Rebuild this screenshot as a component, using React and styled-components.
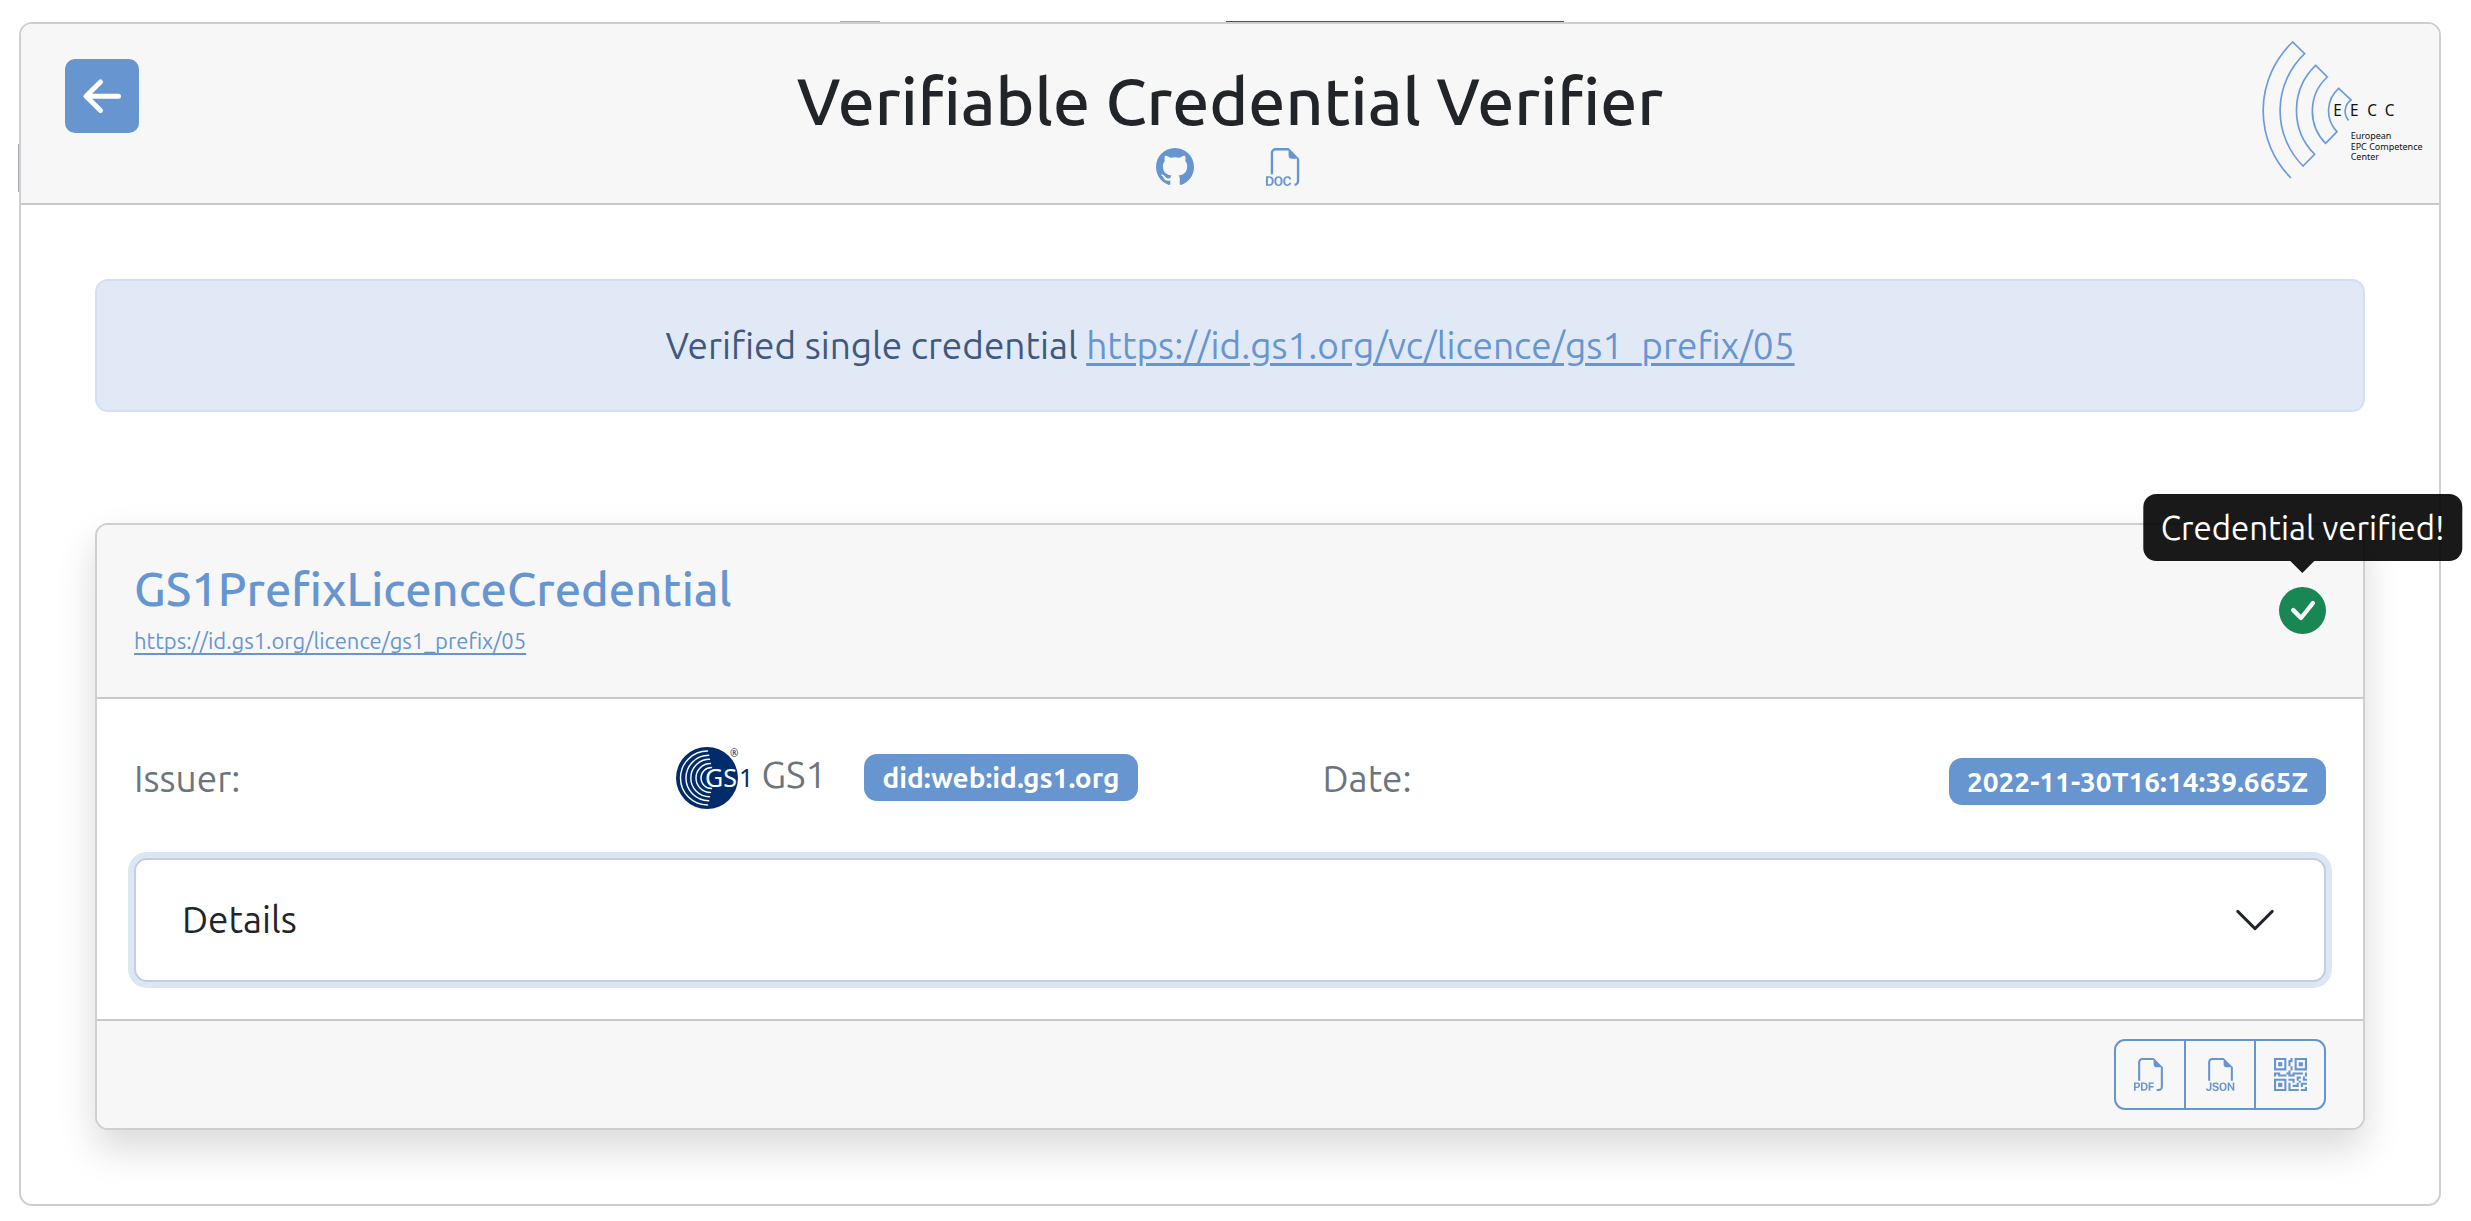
import React, { useState } from "react";
import styled, { createGlobalStyle } from "styled-components";
import {
  BsGithub,
  BsFiletypeDoc,
  BsFiletypePdf,
  BsFiletypeJson,
  BsQrCode,
  BsCheckCircleFill,
} from "react-icons/bs";

const color = {
  primary: "#6795d0",
  text: "#212529",
  muted: "#6c757d",
  line: "#cfcfcf",
  cap: "#f7f7f7",
};

const GlobalStyle = createGlobalStyle`
  *, *::before, *::after { box-sizing: border-box; }
  body {
    margin: 0;
    background: #fff;
    color: ${color.text};
    font-family: Ubuntu, "Noto Sans", "Open Sans", sans-serif;
    font-size: 37px;
    line-height: 56px;
  }
  h1, h2, p { margin: 0; font-weight: 500; }
  a { color: ${color.primary}; text-underline-offset: 4px; }
  button { font: inherit; color: inherit; cursor: pointer; }
`;

const Page = styled.div`
  padding: 22px 30px 15px 19px;
  background:
    linear-gradient(#4a525a, #4a525a) 1226px 21px / 338px 1px no-repeat,
    linear-gradient(#aaa, #aaa) 840px 21px / 40px 1px no-repeat,
    linear-gradient(#a9a9b2, #a9a9b2) 18px 144px / 1px 48px no-repeat;
`;

const Panel = styled.main`
  border: 2px solid ${color.line};
  border-radius: 13px;
  background: #fff;
`;

const PanelHeader = styled.header`
  display: grid;
  grid-template-columns: 1fr auto 1fr;
  align-items: start;
  padding: 14px 12px 17px;
  background: ${color.cap};
  border-bottom: 2px solid #c9c9c9;
  border-radius: 11px 11px 0 0;
`;

const BackButton = styled.button`
  display: flex;
  width: 74px;
  height: 74px;
  margin: 21px 0 0 32px;
  padding: 0;
  border: 0;
  border-radius: 10px;
  background: ${color.primary};
  color: #fff;
`;

const Heading = styled.div`
  display: flex;
  flex-direction: column;
  align-items: center;
  padding-top: 22px;
`;

const Title = styled.h1`
  font-size: 66px;
  line-height: 80px;
`;

const HeaderLinks = styled.nav`
  display: flex;
  gap: 72px;
  margin-top: 8px;
  a { display: flex; }
`;

const Logo = styled.svg`
  display: block;
  justify-self: end;
`;

const Content = styled.div`
  display: grid;
  gap: 111px;
  padding: 74px;
`;

const Alert = styled.p`
  padding: 37px;
  border: 2px solid #d2e0f1;
  border-radius: 13px;
  background: #e1e9f6;
  color: #3e597d;
  font-weight: 400;
  line-height: 55px;
  text-align: center;
`;

const Card = styled.section`
  border: 2px solid ${color.line};
  border-radius: 13px;
  background: #fff;
  box-shadow: 0 19px 38px rgba(0, 0, 0, 0.15);
`;

const CardHeader = styled.header`
  display: flex;
  justify-content: space-between;
  align-items: center;
  padding: 31px 37px 32px;
  background: ${color.cap};
  border-bottom: 2px solid #c9c9c9;
  border-radius: 11px 11px 0 0;
`;

const CardHeading = styled.div`
  padding-top: 5px;
`;

const CardTitle = styled.h2`
  color: ${color.primary};
  font-size: 47px;
  line-height: 56px;
`;

const CardLink = styled.a`
  display: block;
  font-size: 22px;
  line-height: 48px;
`;

const Status = styled.div`
  position: relative;
  display: flex;
  color: #198754;
`;

const Tooltip = styled.div`
  position: absolute;
  bottom: calc(100% + 26px);
  left: 50%;
  transform: translateX(-50%);
  padding: 10px 18px;
  border-radius: 13px;
  background: rgba(0, 0, 0, 0.9);
  color: #fff;
  font-size: 33px;
  line-height: 47px;
  white-space: nowrap;

  &::after {
    content: "";
    position: absolute;
    top: 100%;
    left: 50%;
    margin-left: -12px;
    border: 12px solid transparent;
    border-top-color: rgba(0, 0, 0, 0.9);
    border-bottom: 0;
  }
`;

const CardBody = styled.div`
  padding: 38px 37px 37px;
`;

const Facts = styled.dl`
  display: flex;
  justify-content: space-between;
  gap: 185px;
  margin: 0 0 37px;
`;

const Fact = styled.div`
  display: flex;
  flex: 1;
  justify-content: space-between;
  align-items: ${(p) => p.$align};
  height: 84px;
  padding: ${(p) => (p.$align === "baseline" ? "14px 0" : "0")};
  color: ${color.muted};
`;

const FactValue = styled.dd`
  display: flex;
  align-items: baseline;
  margin: 0;
  padding-bottom: 2px;
  svg { align-self: center; }
`;

const IssuerName = styled.span`
  margin: 0 38px 0 8px;
`;

const Badge = styled.span`
  padding: 5px 18px;
  border-radius: 13px;
  background: ${color.primary};
  color: #fff;
  font-size: 28px;
  font-weight: 700;
  line-height: 37px;
`;

const DetailsButton = styled.button`
  display: flex;
  justify-content: space-between;
  align-items: center;
  width: 100%;
  padding: 32px 46px;
  border: 2px solid #c2cfe3;
  border-radius: 13px;
  background: #fff;
  color: ${color.text};
  text-align: left;
  outline: none;
  box-shadow: 0 0 0 6px #dbe7f3;
`;

const CardFooter = styled.footer`
  display: flex;
  justify-content: flex-end;
  padding: 18px 37px;
  background: ${color.cap};
  border-top: 2px solid #c9c9c9;
  border-radius: 0 0 11px 11px;
`;

const ButtonGroup = styled.div`
  display: flex;
  border: 2px solid ${color.primary};
  border-radius: 11px;
`;

const GroupButton = styled.button`
  display: flex;
  align-items: center;
  justify-content: center;
  height: 67px;
  padding: 0 17px 0 18px;
  border: 0;
  background: transparent;
  color: ${color.primary};
  & + & { border-left: 2px solid ${color.primary}; }
`;

function ArrowLeft() {
  return (
    <svg
      width="74"
      height="74"
      viewBox="0 0 74 74"
      fill="none"
      stroke="currentColor"
      strokeWidth="5"
      strokeLinecap="round"
      strokeLinejoin="round"
      aria-hidden="true"
    >
      <path d="M35.5 23L21 37.3L35.5 51.5M22 37.3H53.5" />
    </svg>
  );
}

function EeccLogo() {
  return (
    <Logo width="167" height="144" viewBox="120 112 501 432" role="img" aria-label="EECC">
      <g fill="none" stroke="#6a9be0" strokeWidth="5">
        <path d="M213 532A285 285 0 0 1 218 124L254 159A235 235 0 0 0 249 496L284 461A187 187 0 0 1 287 194L322 229A138 138 0 0 0 317 428L351 393A90 90 0 0 1 356 263L393 298A41 41 0 0 0 386 359" />
      </g>
      <g fill="#111" fontFamily="Noto Sans, Open Sans, sans-serif">
        <text x="340 390 442 494" y="347" fontSize="46">EECC</text>
        <text x="392" y="416" fontSize="27">European</text>
        <text x="392" y="447" fontSize="27">EPC Competence</text>
        <text x="392" y="479" fontSize="27">Center</text>
      </g>
    </Logo>
  );
}

function Gs1Logo() {
  return (
    <svg width="78" height="62" viewBox="0 0 78 62" role="img" aria-label="GS1 logo">
      <circle cx="31" cy="31" r="31" fill="#002c6c" />
      <g fill="none" stroke="#fff" strokeWidth="1.4" strokeLinecap="round">
        <path d="M31.5 4A27 27 0 0 0 31.5 58" />
        <path d="M32.7 8.3A22.7 22.7 0 0 0 32.7 53.7" />
        <path d="M33.5 12.3A18.7 18.7 0 0 0 33.5 49.7" />
        <path d="M34.5 16.5A14.5 14.5 0 0 0 34.5 45.5" />
        <path d="M35.5 20.5A10.5 10.5 0 0 0 35.5 41.5" />
      </g>
      <g fontFamily="Noto Sans, Open Sans, sans-serif">
        <text x="29" y="40" fontSize="25" fill="#fff">GS</text>
        <text x="63" y="40" fontSize="25" fill="#002c6c">1</text>
        <text x="54" y="10" fontSize="10" fill="#002c6c">®</text>
      </g>
    </svg>
  );
}

function Chevron() {
  return (
    <svg width="46" height="46" viewBox="0 0 16 16" fill={color.text} aria-hidden="true">
      <path
        fillRule="evenodd"
        d="M1.646 4.646a.5.5 0 0 1 .708 0L8 10.293l5.646-5.647a.5.5 0 0 1 .708.708l-6 6a.5.5 0 0 1-.708 0l-6-6a.5.5 0 0 1 0-.708z"
      />
    </svg>
  );
}

export default function App() {
  const [open, setOpen] = useState(false);
  return (
    <>
      <GlobalStyle />
      <Page>
        <Panel>
          <PanelHeader>
            <BackButton type="button" aria-label="Back">
              <ArrowLeft />
            </BackButton>
            <Heading>
              <Title>Verifiable Credential Verifier</Title>
              <HeaderLinks>
                <a href="#github" aria-label="GitHub"><BsGithub size={38} /></a>
                <a href="#docs" aria-label="Documentation"><BsFiletypeDoc size={38} /></a>
              </HeaderLinks>
            </Heading>
            <EeccLogo />
          </PanelHeader>
          <Content>
            <Alert>
              Verified single credential{" "}
              <a href="#credential">https://id.gs1.org/vc/licence/gs1_prefix/05</a>
            </Alert>
            <Card>
              <CardHeader>
                <CardHeading>
                  <CardTitle>GS1PrefixLicenceCredential</CardTitle>
                  <CardLink href="#licence">https://id.gs1.org/licence/gs1_prefix/05</CardLink>
                </CardHeading>
                <Status>
                  <BsCheckCircleFill size={47} />
                  <Tooltip role="tooltip">Credential verified!</Tooltip>
                </Status>
              </CardHeader>
              <CardBody>
                <Facts>
                  <Fact $align="center">
                    <dt>Issuer:</dt>
                    <FactValue>
                      <Gs1Logo />
                      <IssuerName>GS1</IssuerName>
                      <Badge>did:web:id.gs1.org</Badge>
                    </FactValue>
                  </Fact>
                  <Fact $align="baseline">
                    <dt>Date:</dt>
                    <FactValue><Badge>2022-11-30T16:14:39.665Z</Badge></FactValue>
                  </Fact>
                </Facts>
                <DetailsButton type="button" aria-expanded={open} onClick={() => setOpen(!open)}>
                  Details
                  <Chevron />
                </DetailsButton>
              </CardBody>
              <CardFooter>
                <ButtonGroup role="group" aria-label="Export">
                  <GroupButton type="button" aria-label="PDF"><BsFiletypePdf size={33} /></GroupButton>
                  <GroupButton type="button" aria-label="JSON"><BsFiletypeJson size={33} /></GroupButton>
                  <GroupButton type="button" aria-label="QR code"><BsQrCode size={33} /></GroupButton>
                </ButtonGroup>
              </CardFooter>
            </Card>
          </Content>
        </Panel>
      </Page>
    </>
  );
}
